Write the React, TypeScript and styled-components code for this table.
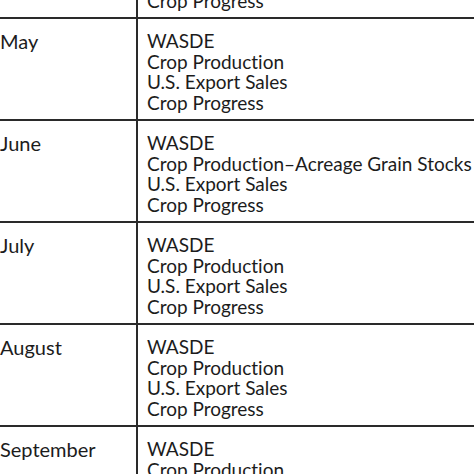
import styled, { createGlobalStyle } from 'styled-components';

const GlobalStyle = createGlobalStyle`
  html, body {
    margin: 0;
    padding: 0;
    background: #ffffff;
    overflow: hidden;
  }
  body {
    width: 474px;
    height: 474px;
    font-family: Lato, "Liberation Sans", sans-serif;
    font-variant-ligatures: none;
    color: #1c1c1c;
  }
`;

interface Row {
  month: string;
  reports: string[];
}

const standard = ['WASDE', 'Crop Production', 'U.S. Export Sales', 'Crop Progress'];

const rows: Row[] = [
  { month: 'April', reports: standard },
  { month: 'May', reports: standard },
  {
    month: 'June',
    reports: ['WASDE', 'Crop Production–Acreage Grain Stocks', 'U.S. Export Sales', 'Crop Progress'],
  },
  { month: 'July', reports: standard },
  { month: 'August', reports: standard },
  { month: 'September', reports: standard },
];

export default function App() {
  return (
    <>
      <GlobalStyle />
      <S.Viewport>
        <S.Table>
          {rows.map((row) => (
            <S.Row key={row.month}>
              <S.Month>{row.month}</S.Month>
              <S.Reports>
                {row.reports.map((report) => (
                  <S.Report key={report}>{report}</S.Report>
                ))}
              </S.Reports>
            </S.Row>
          ))}
        </S.Table>
      </S.Viewport>
    </>
  );
}

const S = {
  Viewport: styled.div`
    width: 474px;
    height: 474px;
    overflow: hidden;
  `,
  Table: styled.div`
    display: flex;
    flex-direction: column;
    margin-top: -83px;
    width: 540px;
  `,
  Row: styled.div`
    display: grid;
    grid-template-columns: 138px 1fr;
    height: 102px;
    border-bottom: 2px solid #2a2a2a;
    box-sizing: border-box;
  `,
  Month: styled.div`
    padding: 12px 0 0 0;
    font-size: 20px;
    line-height: 20.6px;
    border-right: 2px solid #2a2a2a;
  `,
  Reports: styled.div`
    display: flex;
    flex-direction: column;
    padding: 12px 0 0 9px;
  `,
  Report: styled.div`
    font-size: 19px;
    line-height: 20.6px;
    white-space: nowrap;
  `,
};
